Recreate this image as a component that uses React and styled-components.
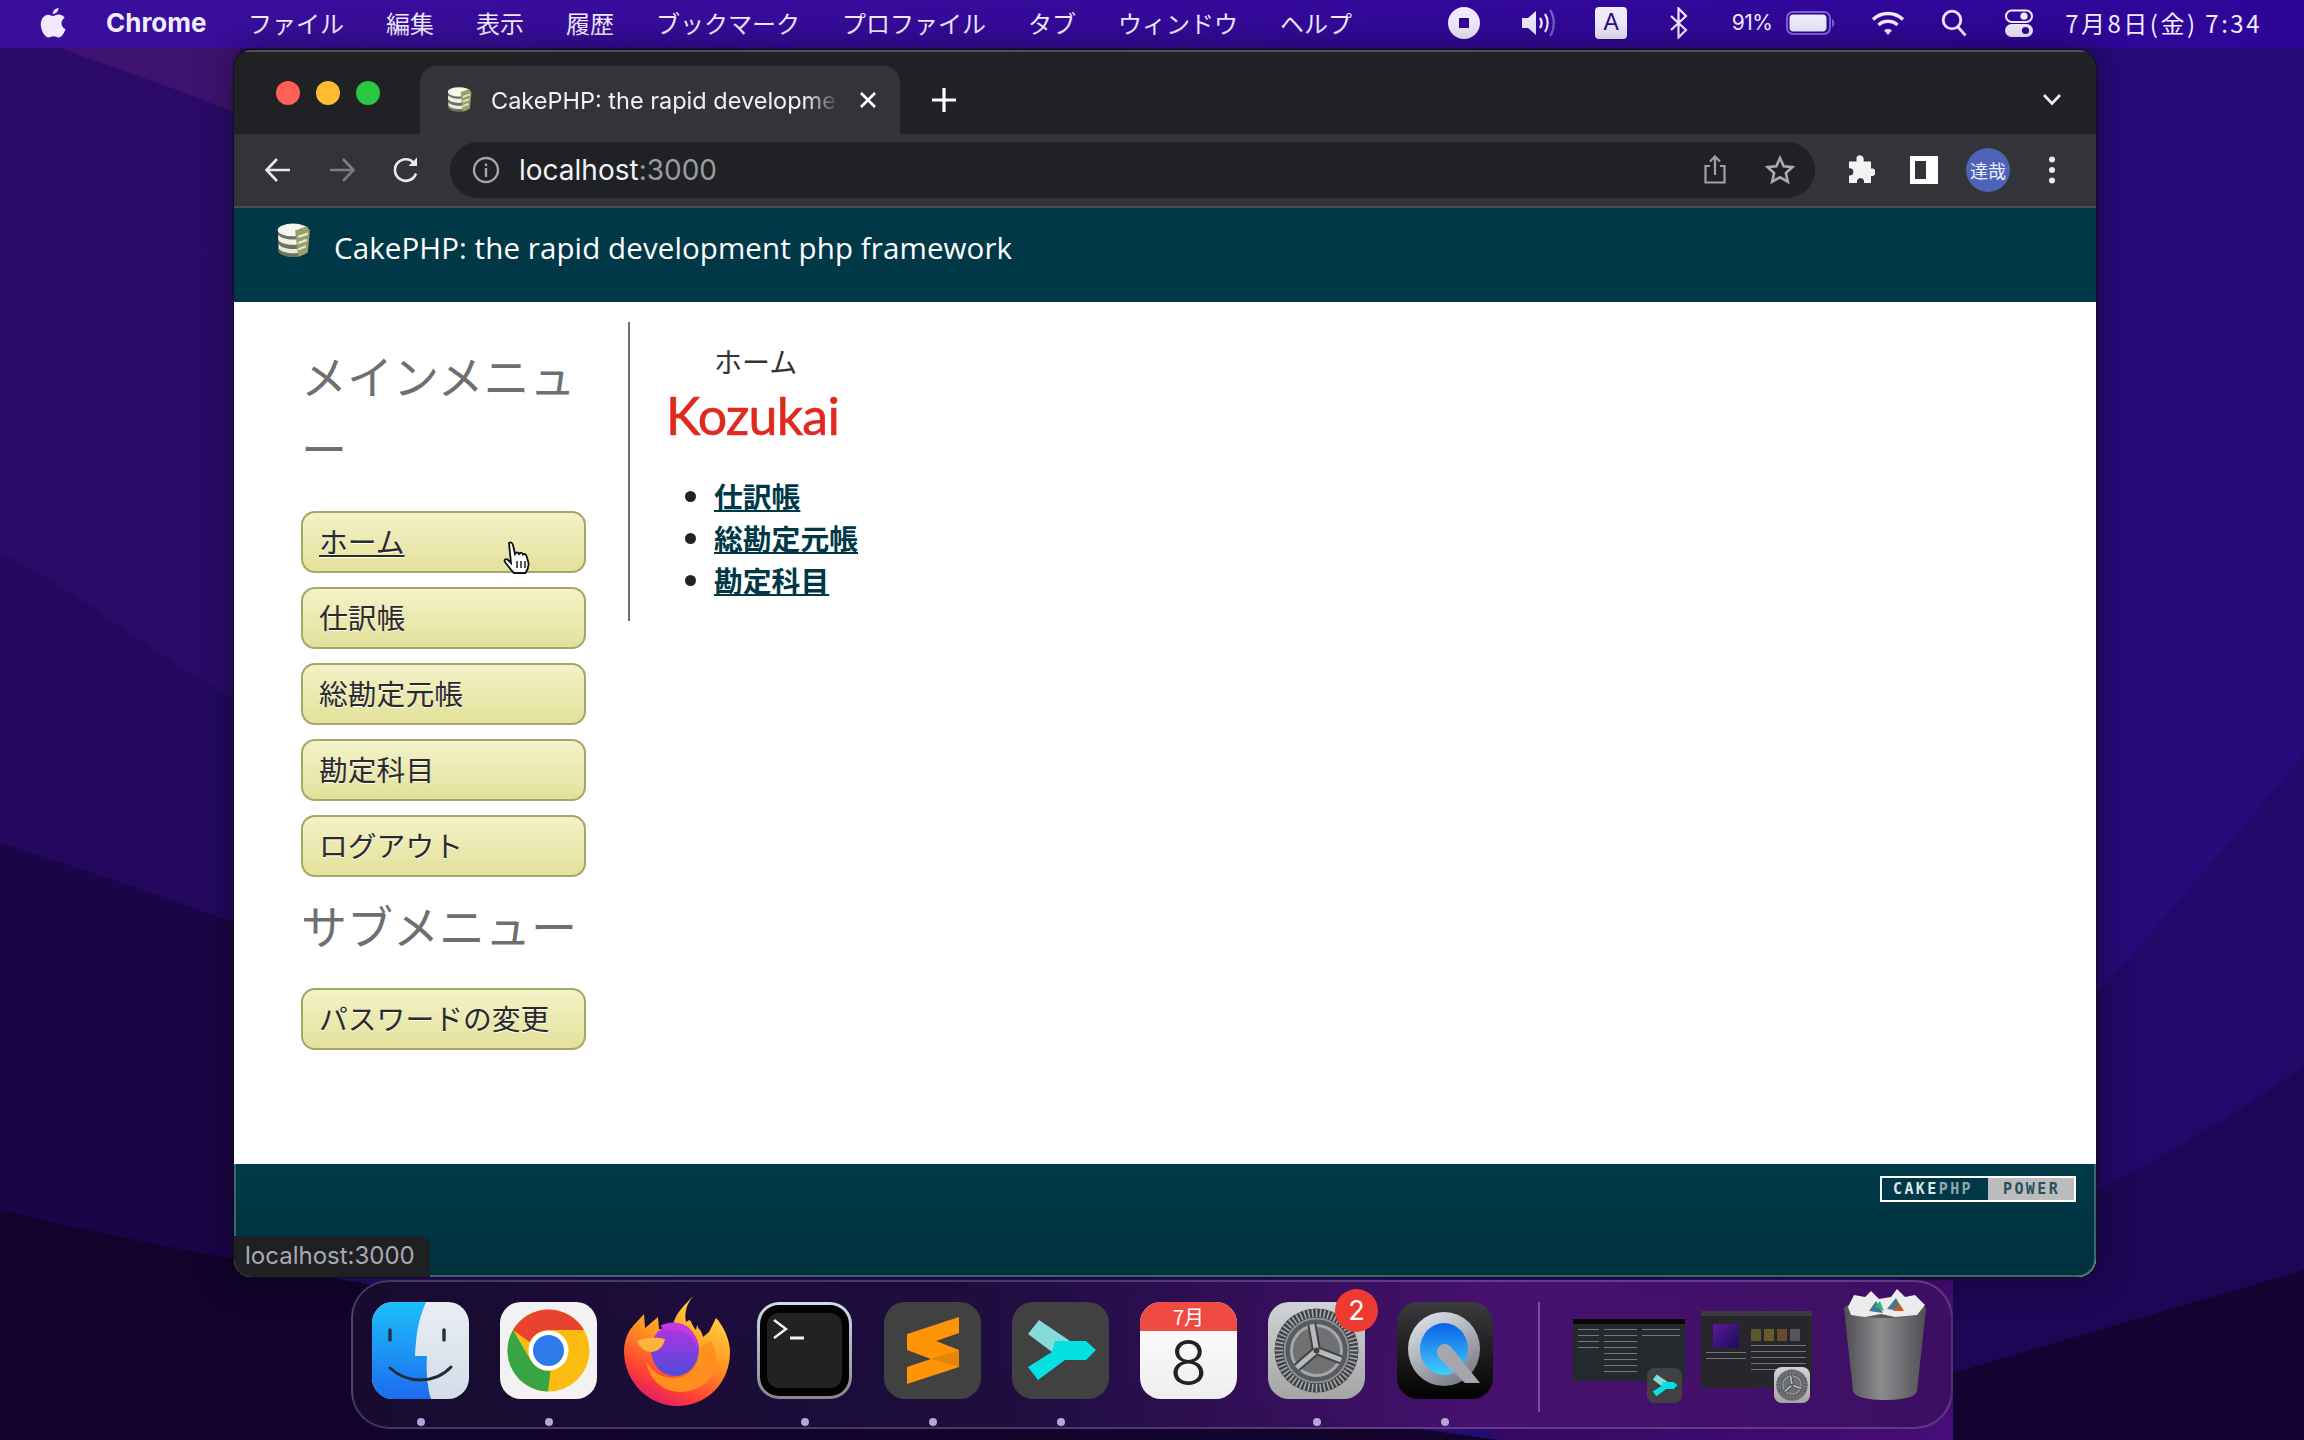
import styled, { createGlobalStyle } from "styled-components";

const GlobalStyle = createGlobalStyle`
  html, body {
    margin: 0;
    padding: 0;
    background: #16063f;
  }
  * {
    box-sizing: border-box;
  }
  svg {
    flex: none;
  }
`;

const MENU_ITEMS = ["ファイル", "編集", "表示", "履歴", "ブックマーク", "プロファイル", "タブ", "ウィンドウ", "ヘルプ"];
const SIDE_MAIN = ["ホーム", "仕訳帳", "総勘定元帳", "勘定科目", "ログアウト"];
const LINKS = ["仕訳帳", "総勘定元帳", "勘定科目"];

function Wallpaper() {
  return (
    <WallpaperArt viewBox="0 0 2304 1440" preserveAspectRatio="none">
      <defs>
        <linearGradient id="wallBase" x1="0" y1="0" x2="1" y2="0">
          <stop offset="0" stopColor="#2b0a68" />
          <stop offset="1" stopColor="#260a7a" />
        </linearGradient>
        <linearGradient id="wallGlow" x1="0" y1="0" x2="1" y2="0">
          <stop offset="0" stopColor="#2c0858" />
          <stop offset="1" stopColor="#470c78" />
        </linearGradient>
      </defs>
      <rect width="2304" height="1440" fill="url(#wallBase)" />
      <path d="M60 48C120 70 180 90 240 115V48z" fill="#3e1270" />
      <path d="M0 553C80 590 160 660 240 702V1440H0z" fill="#240860" />
      <path d="M0 843Q120 880 240 925V1440H0z" fill="#1a0547" />
      <path d="M0 1210Q120 1240 400 1290L1500 1440H0z" fill="#11032c" />
      <path d="M1900 1200Q2100 1000 2304 754V1440H1900z" fill="#220868" />
      <path d="M1900 1270Q2100 1210 2304 1066V1440H1900z" fill="#1d0655" />
      <path d="M1300 1280L1489 1430 1500 1440H1953V1280z" fill="url(#wallGlow)" />
      <path d="M1953 1373L2304 1270V1440H1953z" fill="#130330" />
    </WallpaperArt>
  );
}

function CakeIcon({ size = 38 }) {
  return (
    <svg width={size} height={size} viewBox="0 0 36 36">
      <path d="M4 8v20c4 7 24 7 28 0V8z" fill="#6f725e" />
      <path d="M4 12c4 6 24 6 28 0v5c-4 6-24 6-28 0z" fill="#f2f1e6" />
      <path d="M4.500 21c4 6 23 6 27 0v4c-4 6-23 6-27 0z" fill="#ecebdd" />
      <ellipse cx="18" cy="7.500" rx="14.500" ry="6" fill="#f6f5ee" />
      <path d="M20 8l11-4 3 4-2 21-9 4z" fill="#9aa06a" />
      <path d="M23 14l9-3M23 20l8-3M23 26l7-3" stroke="#e4e6cf" strokeWidth="2.200" />
    </svg>
  );
}

function AppleIcon() {
  return (
    <svg width="26" height="32" viewBox="0 0 26 32" fill="#f1eaff">
      <path d="M18.500 1c.2 2.500-2.300 6-5.800 6-.3-2.700 2.500-5.700 5.800-6z" />
      <path d="M13 9c1.500 0 3-1.500 5.700-1.500 2.100 0 4.500 1 6 3.300-4.700 2.800-4 9.500.9 11.400-1.300 3.400-4 8.300-7 8.300-1.900 0-2.800-1.200-5-1.200s-3.200 1.200-5 1.200C4.800 30.500.8 23.500.8 17.500c0-6 3.700-9.800 7.300-9.800 2.300 0 3.700 1.300 4.900 1.300z" />
    </svg>
  );
}

function BackIcon({ color = "#e8eaed", flip }) {
  return (
    <svg width="28" height="28" viewBox="0 0 28 28" fill="none" stroke={color} strokeWidth="2.600" style={flip ? { transform: "scaleX(-1)" } : undefined}>
      <path d="M26 14H3M13 3L2.500 14 13 25" />
    </svg>
  );
}

function ReloadIcon() {
  return (
    <svg width="28" height="28" viewBox="0 0 28 28" fill="none" stroke="#e8eaed" strokeWidth="2.600">
      <path d="M24 17.500A10.800 10.800 0 1 1 22 7" />
      <path d="M25 1.500V10h-8.500z" fill="#e8eaed" stroke="none" />
    </svg>
  );
}

function InfoIcon() {
  return (
    <svg width="28" height="28" viewBox="0 0 28 28" fill="none">
      <circle cx="14" cy="14" r="12" stroke="#a4a6a9" strokeWidth="2.400" />
      <rect x="12.800" y="12" width="2.400" height="9" fill="#a4a6a9" />
      <rect x="12.800" y="7.500" width="2.400" height="2.600" fill="#a4a6a9" />
    </svg>
  );
}

function ShareIcon() {
  return (
    <svg width="24" height="30" viewBox="0 0 24 30" fill="none" stroke="#a0a2a5" strokeWidth="2.200">
      <path d="M7 11H2.500v16.500h19V11H17" />
      <path d="M12 20V2M7 6.500L12 1.500l5 5" />
    </svg>
  );
}

function StarIcon() {
  return (
    <svg width="30" height="30" viewBox="0 0 30 30" fill="none" stroke="#a8aaad" strokeWidth="2.600">
      <path d="M15 3l3.700 8.200 8.800.9-6.600 5.900 1.900 8.700L15 22.300l-7.800 4.400 1.900-8.700-6.600-5.900 8.800-.9z" />
    </svg>
  );
}

function PuzzleIcon() {
  return (
    <svg width="30" height="30" viewBox="0 0 30 30" fill="#f1f3f4">
      <path d="M11.500 2.500a3.800 3.800 0 0 1 7.200 1.500v2.500h7.300v7h2a4 4 0 0 1 0 7.500h-2v7h-7v-2.500a3.700 3.700 0 0 0-7 0V28H4v-7.500h1.500a3.700 3.700 0 0 0 0-7.200H4v-6.800h7.500z" />
    </svg>
  );
}

function PanelIcon() {
  return (
    <svg width="28" height="28" viewBox="0 0 28 28">
      <path fillRule="evenodd" d="M0 0h28v28H0zM5 5v18h11V5z" fill="#fff" />
    </svg>
  );
}

function DotsIcon() {
  return (
    <svg width="8" height="28" viewBox="0 0 8 28" fill="#e8eaed">
      <circle cx="4" cy="3.500" r="3" />
      <circle cx="4" cy="14" r="3" />
      <circle cx="4" cy="24.500" r="3" />
    </svg>
  );
}

function StopIcon() {
  return (
    <svg width="32" height="32" viewBox="0 0 32 32">
      <path fillRule="evenodd" d="M16 0a16 16 0 1 1 0 32 16 16 0 0 1 0-32zM11 11v10h10V11z" fill="#f1ecff" />
    </svg>
  );
}

function SpeakerIcon() {
  return (
    <svg width="36" height="30" viewBox="0 0 36 30" fill="none">
      <path d="M1 10h6l8-7v24l-8-7H1z" fill="#efe9ff" />
      <path d="M19 10c2 3 2 7 0 10" stroke="#efe9ff" strokeWidth="2.400" />
      <path d="M24 6c3.500 5 3.500 13 0 18" stroke="#efe9ff" strokeWidth="2.200" />
      <path d="M29 2c5 7 5 19 0 26" stroke="#7563c8" strokeWidth="2.200" />
    </svg>
  );
}

function BluetoothIcon() {
  return (
    <svg width="20" height="32" viewBox="0 0 20 32" fill="none" stroke="#efe9ff" strokeWidth="2.200">
      <path d="M2 9l15 14-7.500 7.500v-29L17 9 2 23" />
    </svg>
  );
}

function BatteryIcon() {
  return (
    <svg width="50" height="24" viewBox="0 0 50 24">
      <rect x="1" y="1" width="43" height="22" rx="6" fill="none" stroke="#7868d0" strokeWidth="2" />
      <rect x="3.500" y="3.500" width="37" height="17" rx="4" fill="#f1ecff" />
      <path d="M46 8c3 1 3 7 0 8z" fill="#7868d0" />
    </svg>
  );
}

function WifiIcon() {
  return (
    <svg width="34" height="26" viewBox="0 0 34 26" fill="none" stroke="#f1ecff" strokeWidth="3.400">
      <path d="M2 9.500c8.500-8 21.500-8 30 0" />
      <path d="M7.500 15c5.500-5 13.500-5 19 0" />
      <path d="M13 20.500l4 4.500 4-4.500c-2.400-2-5.600-2-8 0z" fill="#f1ecff" stroke="none" />
    </svg>
  );
}

function SearchIcon() {
  return (
    <svg width="26" height="28" viewBox="0 0 26 28" fill="none" stroke="#f1ecff" strokeWidth="2.800">
      <circle cx="11" cy="11" r="8.800" />
      <path d="M17 18l7.500 8.500" />
    </svg>
  );
}

function ControlIcon() {
  return (
    <svg width="28" height="28" viewBox="0 0 28 28">
      <rect x="1" y="1.500" width="26" height="11.500" rx="5.700" fill="none" stroke="#f1ecff" strokeWidth="2" />
      <circle cx="19" cy="7.200" r="3.600" fill="#f1ecff" />
      <rect x="0" y="15" width="28" height="13" rx="6.500" fill="#f1ecff" />
      <circle cx="20.500" cy="21.500" r="3.600" fill="#34079a" />
    </svg>
  );
}

function FinderIcon({ size = 97 }) {
  return (
    <svg width={size} height={size} viewBox="0 0 97 97">
      <defs>
        <linearGradient id="finderBlue" x1="0" y1="0" x2="0" y2="1">
          <stop offset="0" stopColor="#1cc0fb" />
          <stop offset="1" stopColor="#1c6bef" />
        </linearGradient>
        <linearGradient id="finderGrey" x1="0" y1="0" x2="0" y2="1">
          <stop offset="0" stopColor="#e9eef2" />
          <stop offset="1" stopColor="#d2dde8" />
        </linearGradient>
      </defs>
      <rect width="97" height="97" rx="21" fill="url(#finderGrey)" />
      <path d="M21 0h33c-8 18-10 34-11 54h12c-1 14 0 30 4 43H21A21 21 0 0 1 0 76V21A21 21 0 0 1 21 0z" fill="url(#finderBlue)" />
      <path d="M18 28v10M72 28v10" stroke="#2a3140" strokeWidth="3.500" strokeLinecap="round" />
      <path d="M18 66c17 16 45 16 61-1" fill="none" stroke="#1e2a3e" strokeWidth="3" strokeLinecap="round" />
    </svg>
  );
}

function ChromeIcon() {
  return (
    <svg width="97" height="97" viewBox="0 0 97 97">
      <rect width="97" height="97" rx="21" fill="#f3f2f3" />
      <circle cx="48.500" cy="48.500" r="41" fill="#fbbc10" />
      <path d="M13 28A41 41 0 0 1 84 28H48.500a21 21 0 0 0-19 12z" fill="#e8432e" />
      <path d="M13 28l17.500 30a21 21 0 0 0 20 11L48 89.500A41 41 0 0 1 13 28z" fill="#37a546" />
      <circle cx="48.500" cy="48.500" r="20" fill="#fff" />
      <circle cx="48.500" cy="48.500" r="15.500" fill="#3079ea" />
    </svg>
  );
}

function FirefoxIcon() {
  return (
    <svg width="106" height="110" viewBox="0 0 106 110">
      <defs>
        <linearGradient id="foxBody" x1="0.800" y1="0" x2="0.300" y2="1">
          <stop offset="0" stopColor="#ffe24a" />
          <stop offset="0.450" stopColor="#ff9a20" />
          <stop offset="0.800" stopColor="#ff4035" />
          <stop offset="1" stopColor="#e01a6a" />
        </linearGradient>
        <linearGradient id="foxGlobe" x1="0.500" y1="0" x2="0.500" y2="1">
          <stop offset="0" stopColor="#b533e2" />
          <stop offset="1" stopColor="#4f4bd8" />
        </linearGradient>
      </defs>
      <path d="M69 0c-6 8-9 16-7 26 6-5 4 1 10 8l1-5c2 6 4 3 6 12l6-5 7-14c6 6 14 20 14 34 0 30-22 54-53 54C25 110 0 86 0 55c0-9 3-18 9-25l11-12 1 14 13-11 1 12c6 0 10-2 14-3C50 18 62 8 69 0z" fill="url(#foxBody)" />
      <ellipse cx="51" cy="54" rx="24" ry="26" fill="url(#foxGlobe)" />
      <path d="M13 45c8-4 20-4 28-2-2 8-6 12-14 13-6 0-11-4-14-11z" fill="#ffb33c" />
      <path d="M36 30c8-5 22-5 30 3 6 6 8 18 8 22-2-10-8-18-18-20-6-1-14 0-20-5z" fill="#c539dd" />
      <path d="M76 52c2 16-10 30-26 30-14 0-24-8-28-18 2 18 16 32 34 32 20 0 36-14 36-34 0-6-2-12-6-18 0 4-6 4-10 8z" fill="#ff8f1f" />
    </svg>
  );
}

function TerminalIcon() {
  return (
    <svg width="95" height="97" viewBox="0 0 95 97">
      <defs>
        <linearGradient id="termEdge" x1="0" y1="0" x2="0" y2="1">
          <stop offset="0" stopColor="#cfdee8" />
          <stop offset="1" stopColor="#86868a" />
        </linearGradient>
      </defs>
      <rect width="95" height="97" rx="22" fill="url(#termEdge)" />
      <rect x="3" y="3" width="89" height="91" rx="19" fill="#020202" />
      <rect x="10" y="11" width="75" height="75" rx="12" fill="#222224" />
      <path d="M17 18l12 9-12 9" fill="none" stroke="#f2f2f2" strokeWidth="2.400" />
      <path d="M33 36h14" stroke="#f2f2f2" strokeWidth="3" />
    </svg>
  );
}

function SublimeIcon() {
  return (
    <svg width="97" height="97" viewBox="0 0 97 97">
      <rect width="97" height="97" rx="21" fill="#414141" />
      <path d="M75 15L23 32v16l24 9-24 8v17l52-17V48L52 39l23-8z" fill="#ff9406" />
      <path d="M47 57l28-9v17z" fill="#e68408" />
    </svg>
  );
}

function SiderIcon({ size = 97 }) {
  return (
    <svg width={size} height={size} viewBox="0 0 97 97">
      <rect width="97" height="97" rx="21" fill="#414141" />
      <path d="M27 18L16 32l24 18 18-11z" fill="#86dbd9" />
      <path d="M43 39h31l10 9-10 10H53L26 78 16 65l24-15z" fill="#05e0e2" />
    </svg>
  );
}

function PrefsIcon({ size = 97 }) {
  const teeth = Array.from({ length: 60 }, (_, i) => i * 6);
  return (
    <svg width={size} height={size} viewBox="0 0 97 97">
      <defs>
        <linearGradient id="prefsBg" x1="0" y1="0" x2="0" y2="1">
          <stop offset="0" stopColor="#cfd3d7" />
          <stop offset="1" stopColor="#a5a5a6" />
        </linearGradient>
      </defs>
      <rect width="97" height="97" rx="21" fill="url(#prefsBg)" />
      <circle cx="48.500" cy="48.500" r="42" fill="#3f4143" />
      {teeth.map((a) => (
        <rect key={a} x="47.700" y="7" width="1.600" height="8" fill="#a9acae" transform={`rotate(${a} 48.500 48.500)`} />
      ))}
      <circle cx="48.500" cy="48.500" r="32" fill="#585a5c" stroke="#8f9296" strokeWidth="2" />
      <circle cx="48.500" cy="48.500" r="25" fill="#6e7072" stroke="#a4a7aa" strokeWidth="3" />
      <g transform="rotate(-10 48.500 48.500)">
        <path d="M48.500 48.500V22M48.500 48.500L71 62M48.500 48.500L26 62" stroke="#3f4143" strokeWidth="9" />
        <path d="M48.500 48.500V22M48.500 48.500L71 62M48.500 48.500L26 62" stroke="#b7babd" strokeWidth="5" />
      </g>
      <circle cx="48.500" cy="48.500" r="3" fill="#444" />
    </svg>
  );
}

function QuickTimeIcon() {
  return (
    <svg width="96" height="97" viewBox="0 0 96 97">
      <defs>
        <linearGradient id="qtBg" x1="0" y1="0" x2="0" y2="1">
          <stop offset="0" stopColor="#3b3b3d" />
          <stop offset="1" stopColor="#020203" />
        </linearGradient>
        <linearGradient id="qtRing" x1="0" y1="0" x2="0.600" y2="1">
          <stop offset="0" stopColor="#e8edf5" />
          <stop offset="1" stopColor="#7c8086" />
        </linearGradient>
        <linearGradient id="qtCore" x1="0" y1="0" x2="0" y2="1">
          <stop offset="0" stopColor="#0a60ea" />
          <stop offset="1" stopColor="#42d0fb" />
        </linearGradient>
      </defs>
      <rect width="96" height="97" rx="21" fill="url(#qtBg)" />
      <ellipse cx="47" cy="47" rx="36" ry="37" fill="url(#qtRing)" />
      <ellipse cx="47" cy="47" rx="24" ry="26" fill="url(#qtCore)" />
      <path d="M41 46c3-5 9-5 13-1l29 36H68L42 56c-2-3-3-7-1-10z" fill="#a4a8ae" />
    </svg>
  );
}

function TrashIcon() {
  return (
    <svg width="84" height="111" viewBox="0 0 84 111">
      <defs>
        <linearGradient id="canBody" x1="0" y1="0" x2="1" y2="0">
          <stop offset="0" stopColor="#4e4e52" />
          <stop offset="0.450" stopColor="#8c8c8f" />
          <stop offset="1" stopColor="#505054" />
        </linearGradient>
      </defs>
      <path d="M1 20h82l-9 82c-1 6-15 9-32 9s-31-3-32-9z" fill="url(#canBody)" />
      <ellipse cx="42" cy="20" rx="41" ry="9" fill="#56565a" />
      <path d="M5 18L11 6l11 2 6-6 8 8 12-2 6-8 8 8 10-2 10 10-8 10-22 2-14-3-16 3-14-2z" fill="#ececec" />
      <path d="M26 22l7-10 7 12zM44 20l9-11 7 13z" fill="#3f7a8e" />
      <path d="M32 18l5-6 4 10z" fill="#2cb67a" />
      <path d="M50 22l6-8 5 8z" fill="#c25a2c" />
    </svg>
  );
}

function CalendarIcon() {
  return (
    <CalendarTile>
      <CalendarHead>7月</CalendarHead>
      <CalendarDay>8</CalendarDay>
    </CalendarTile>
  );
}

function ThumbOne() {
  return (
    <ThumbStack $w={112} $after={-15}>
      <ThumbShot $w={112} $h={62} $top={17} $bg="#24292e">
        <ThumbTitle $bg="#050505" />
        <ThumbRow>
          <ThumbCol $w={22}><ThumbLines $n={4} /></ThumbCol>
          <ThumbCol $w={34}><ThumbLines $n={8} /></ThumbCol>
          <ThumbCol $w={40}><ThumbLines $n={2} /></ThumbCol>
        </ThumbRow>
      </ThumbShot>
      <ThumbBadge $right={3}>
        <SiderIcon size={35} />
      </ThumbBadge>
    </ThumbStack>
  );
}

function ThumbTwo() {
  return (
    <ThumbStack $w={111}>
      <ThumbShot $w={111} $h={77} $top={9} $bg="#27272b">
        <ThumbTitle $bg="#3a3a3f" />
        <ThumbRow>
          <ThumbCol $w={40}>
            <ThumbScreen />
            <ThumbLines $n={2} />
          </ThumbCol>
          <ThumbCol $w={55}>
            <ThumbChips>
              <ThumbChip $c="#5a5a30" />
              <ThumbChip $c="#6a5a2a" />
              <ThumbChip $c="#6a4a2a" />
              <ThumbChip $c="#55565a" />
            </ThumbChips>
            <ThumbLines $n={5} />
          </ThumbCol>
        </ThumbRow>
      </ThumbShot>
      <ThumbBadge $right={2}>
        <PrefsIcon size={36} />
      </ThumbBadge>
    </ThumbStack>
  );
}

export default function App() {
  return (
    <Screen>
      <GlobalStyle />
      <Wallpaper />
      <MenuBar>
        <AppleSlot>
          <AppleIcon />
        </AppleSlot>
        <AppName>Chrome</AppName>
        {MENU_ITEMS.map((item) => (
          <MenuItem key={item}>{item}</MenuItem>
        ))}
        <StatusArea>
          <StatusSlot $w={32}><StopIcon /></StatusSlot>
          <StatusSlot $w={36} $gap={41}><SpeakerIcon /></StatusSlot>
          <InputBadge>A</InputBadge>
          <StatusSlot $w={20} $gap={41.5}><BluetoothIcon /></StatusSlot>
          <BatteryText>91%</BatteryText>
          <StatusSlot $w={50} $gap={11.5}><BatteryIcon /></StatusSlot>
          <StatusSlot $w={34} $gap={34.5}><WifiIcon /></StatusSlot>
          <StatusSlot $w={26} $gap={36.5}><SearchIcon /></StatusSlot>
          <StatusSlot $w={28} $gap={38}><ControlIcon /></StatusSlot>
          <ClockText>7月8日(金) 7:34</ClockText>
        </StatusArea>
      </MenuBar>

      <Window>
        <TabStrip>
          <Traffic>
            <Light $c="#fe5f57" />
            <Light $c="#febc2e" />
            <Light $c="#28c840" />
          </Traffic>
          <Tab>
            <CakeIcon size={28} />
            <TabTitle>CakePHP: the rapid developme</TabTitle>
            <TabClose>
              <svg width="18" height="18" viewBox="0 0 18 18" stroke="#fff" strokeWidth="2.600">
                <path d="M2 2l14 14M16 2L2 16" />
              </svg>
            </TabClose>
          </Tab>
          <NewTab>
            <svg width="24" height="24" viewBox="0 0 24 24" stroke="#fff" strokeWidth="3.200">
              <path d="M12 0v24M0 12h24" />
            </svg>
          </NewTab>
          <TabMenu>
            <svg width="20" height="12" viewBox="0 0 20 12" fill="none" stroke="#e8eaed" strokeWidth="2.800">
              <path d="M2 1l8 8.500L18 1" />
            </svg>
          </TabMenu>
        </TabStrip>

        <Toolbar>
          <ToolButton><BackIcon /></ToolButton>
          <ToolButton><BackIcon color="#7b7d80" flip /></ToolButton>
          <ToolButton><ReloadIcon /></ToolButton>
          <Omnibox>
            <InfoIcon />
            <UrlText>
              localhost<UrlPort>:3000</UrlPort>
            </UrlText>
            <OmniActions>
              <ShareIcon />
              <StarIcon />
            </OmniActions>
          </Omnibox>
          <ToolRight>
            <ToolButton><PuzzleIcon /></ToolButton>
            <ToolButton><PanelIcon /></ToolButton>
            <ToolButton><Avatar>達哉</Avatar></ToolButton>
            <ToolButton><DotsIcon /></ToolButton>
          </ToolRight>
        </Toolbar>

        <Viewport>
          <PageHeader>
            <CakeIcon />
            <PageTitle>CakePHP: the rapid development php framework</PageTitle>
          </PageHeader>

          <PageBody>
            <SideColumn>
              <SideHeading>メインメニュー</SideHeading>
              <SideList>
                {SIDE_MAIN.map((label, i) => (
                  <SideButton key={label} $hover={i === 0}>
                    {label}
                    {i === 0 && (
                      <Cursor>
                        <svg width="30" height="34" viewBox="0 0 30 34">
                          <path
                            d="M6 2c2-1.500 3.500 0 4 2l2 9c1-2 3-2 4 0 1-1.500 3-1.500 4 .5 1-1 3-.5 3.500 1.500l2 7c.5 4-1 7-3 10H11c-3-3-6-7-9-11-1.500-2 1-4 3-2l3 3z"
                            fill="#fff"
                            stroke="#111"
                            strokeWidth="1.800"
                          />
                          <path d="M14 20v7M18 20v7M22 20v7" stroke="#111" strokeWidth="1.400" />
                        </svg>
                      </Cursor>
                    )}
                  </SideButton>
                ))}
              </SideList>
              <SubHeading>サブメニュー</SubHeading>
              <SideButton>パスワードの変更</SideButton>
            </SideColumn>

            <MainColumn>
              <Crumb>ホーム</Crumb>
              <BrandTitle>Kozukai</BrandTitle>
              <LinkList>
                {LINKS.map((label) => (
                  <LinkItem key={label}>
                    <PageLink>{label}</PageLink>
                  </LinkItem>
                ))}
              </LinkList>
            </MainColumn>
          </PageBody>

          <PageFooter>
            <PowerBadge>
              <PowerLeft>
                CAKE<PowerDim>PHP</PowerDim>
              </PowerLeft>
              <PowerRight>POWER</PowerRight>
            </PowerBadge>
          </PageFooter>
          <StatusBubble>localhost:3000</StatusBubble>
        </Viewport>
      </Window>

      <Dock>
        <DockApp $dot><FinderIcon /></DockApp>
        <DockApp $dot><ChromeIcon /></DockApp>
        <DockApp><FirefoxIcon /></DockApp>
        <DockApp $dot><TerminalIcon /></DockApp>
        <DockApp $dot><SublimeIcon /></DockApp>
        <DockApp $dot><SiderIcon /></DockApp>
        <DockApp><CalendarIcon /></DockApp>
        <DockApp $dot>
          <PrefsIcon />
          <Badge>2</Badge>
        </DockApp>
        <DockApp $dot><QuickTimeIcon /></DockApp>
        <DockDivider />
        <ThumbOne />
        <ThumbTwo />
        <DockApp $w={84} $lift={6}><TrashIcon /></DockApp>
      </Dock>
    </Screen>
  );
}

const Screen = styled.div`
  width: 2304px;
  height: 1440px;
  overflow: hidden;
  position: relative;
  display: flex;
  flex-direction: column;
`;

const WallpaperArt = styled.svg`
  position: absolute;
  inset: 0;
  width: 2304px;
  height: 1440px;
`;

const MenuBar = styled.div`
  position: relative;
  height: 48px;
  flex: none;
  display: flex;
  align-items: center;
  background: linear-gradient(90deg, #3a0f9c, #2f0598);
  color: #f1ecff;
  font-family: "Noto Sans CJK JP", "Liberation Sans", sans-serif;
  font-size: 24px;
  padding: 0 38px 3px 40px;
`;

const AppleSlot = styled.div`
  width: 66px;
  display: flex;
  align-items: center;
`;

const AppName = styled.div`
  width: 142px;
  font-family: Inter, "Liberation Sans", sans-serif;
  font-weight: 700;
  font-size: 26px;
`;

const MenuItem = styled.div`
  margin-right: 42px;
  white-space: nowrap;
`;

const StatusArea = styled.div`
  margin-left: auto;
  display: flex;
  align-items: center;
`;

const StatusSlot = styled.div`
  width: ${(p) => p.$w}px;
  margin-left: ${(p) => p.$gap || 0}px;
  display: flex;
  align-items: center;
  justify-content: center;
`;

const InputBadge = styled.div`
  width: 32px;
  height: 32px;
  margin-left: 38.5px;
  border-radius: 4px;
  background: #f1ecff;
  color: #2c0a80;
  font-family: "Liberation Sans", sans-serif;
  font-size: 23px;
  display: flex;
  align-items: center;
  justify-content: center;
`;

const BatteryText = styled.div`
  margin-left: 43px;
  width: 43px;
  font-family: Inter, sans-serif;
  font-size: 21px;
  letter-spacing: -0.5px;
  white-space: nowrap;
`;

const ClockText = styled.div`
  margin-left: 32px;
  margin-right: 4px;
  font-size: 24px;
  white-space: nowrap;
  letter-spacing: 2.500px;
`;

const Window = styled.div`
  position: relative;
  margin: 2px 208px 0 234px;
  height: 1227px;
  flex: none;
  border-radius: 18px;
  overflow: hidden;
  display: flex;
  flex-direction: column;
  background: #202124;
  box-shadow: 0 0 0 1px #111, 0 0 36px rgba(0, 0, 0, 0.45);
`;

const TabStrip = styled.div`
  height: 84px;
  flex: none;
  display: flex;
  align-items: flex-end;
  background: #202124;
  border-top: 2px solid #505154;
  padding-left: 42px;
`;

const Traffic = styled.div`
  display: flex;
  gap: 16px;
  width: 144px;
  align-self: flex-start;
  margin-top: 29px;
`;

const Light = styled.div`
  width: 24px;
  height: 24px;
  border-radius: 50%;
  background: ${(p) => p.$c};
`;

const Tab = styled.div`
  width: 480px;
  height: 68px;
  background: #323437;
  border-radius: 16px 16px 0 0;
  display: flex;
  align-items: center;
  padding: 0 22px 0 25px;
  gap: 18px;
`;

const TabTitle = styled.div`
  flex: 1;
  overflow: hidden;
  white-space: nowrap;
  color: #f0f1f2;
  font-family: Inter, "Liberation Sans", sans-serif;
  font-size: 23.500px;
  -webkit-mask-image: linear-gradient(90deg, #000 90%, transparent 100%);
  mask-image: linear-gradient(90deg, #000 90%, transparent 100%);
`;

const TabClose = styled.div`
  width: 20px;
  display: flex;
  justify-content: center;
`;

const NewTab = styled.div`
  margin-left: 32px;
  height: 68px;
  display: flex;
  align-items: center;
`;

const TabMenu = styled.div`
  margin-left: auto;
  width: 88px;
  height: 68px;
  display: flex;
  align-items: center;
  justify-content: center;
`;

const Toolbar = styled.div`
  height: 74px;
  flex: none;
  display: flex;
  align-items: center;
  background: #323437;
  border-bottom: 2px solid #4b4d50;
  padding-left: 12px;
`;

const ToolButton = styled.div`
  width: 64px;
  display: flex;
  justify-content: center;
  align-items: center;
`;

const Omnibox = styled.div`
  width: 1365px;
  height: 56px;
  margin-left: 12px;
  border-radius: 28px;
  background: #202124;
  display: flex;
  align-items: center;
  padding: 0 20px 0 22px;
`;

const UrlText = styled.div`
  margin-left: 19px;
  color: #f1f3f4;
  font-family: Inter, "Liberation Sans", sans-serif;
  font-size: 28px;
`;

const UrlPort = styled.span`
  color: #9a9c9f;
`;

const OmniActions = styled.div`
  margin-left: auto;
  display: flex;
  align-items: center;
  gap: 38px;
`;

const ToolRight = styled.div`
  display: flex;
  align-items: center;
  margin-left: 13px;
`;

const Avatar = styled.div`
  width: 44px;
  height: 44px;
  border-radius: 50%;
  background: #4e62b8;
  color: #eef;
  font-family: "Noto Sans CJK JP", sans-serif;
  font-size: 18px;
  display: flex;
  align-items: center;
  justify-content: center;
`;

const Viewport = styled.div`
  flex: 1;
  position: relative;
  display: flex;
  flex-direction: column;
  background: #fff;
`;

const PageHeader = styled.div`
  height: 94px;
  flex: none;
  background: #003847;
  display: flex;
  align-items: flex-start;
  padding: 14px 0 0 40px;
  gap: 22px;
`;

const PageTitle = styled.div`
  color: #fff;
  font-family: "Open Sans", "Noto Sans", sans-serif;
  font-size: 29.500px;
  letter-spacing: 0.1px;
  line-height: 52px;
`;

const PageBody = styled.div`
  flex: 1;
  display: flex;
  align-items: flex-start;
`;

const SideColumn = styled.div`
  width: 394px;
  flex: none;
  padding: 36px 0 0 67px;
  font-family: "Noto Sans CJK JP", sans-serif;
`;

const SideHeading = styled.h2`
  margin: 0 0 29px;
  width: 290px;
  font-weight: 400;
  font-size: 46px;
  line-height: 72px;
  color: #6f6f6f;
  word-break: break-all;
`;

const SubHeading = styled.h2`
  margin: 17px 0 34px;
  font-weight: 400;
  font-size: 46px;
  line-height: 60px;
  color: #6f6f6f;
  white-space: nowrap;
`;

const SideList = styled.div`
  display: flex;
  flex-direction: column;
  gap: 14px;
`;

const SideButton = styled.div`
  position: relative;
  width: 285px;
  height: 62px;
  border: 2px solid #a5a667;
  border-radius: 14px;
  background: linear-gradient(180deg, #f4f2c8 0%, #e3e19a 100%);
  color: #2b2b2b;
  font-size: 28.800px;
  line-height: 56px;
  padding-left: 16px;
  text-shadow: 0 1px 0 #fff;
  text-decoration: ${(p) => (p.$hover ? "underline" : "none")};
`;

const Cursor = styled.span`
  position: absolute;
  left: 200px;
  top: 28px;
  line-height: 0;
`;

const MainColumn = styled.div`
  margin-top: 20px;
  min-height: 299px;
  border-left: 2px solid #6f6f6f;
  padding: 17px 0 0 36px;
  font-family: "Noto Sans CJK JP", sans-serif;
`;

const Crumb = styled.div`
  margin-left: 48px;
  font-size: 28px;
  line-height: 44px;
  color: #333;
`;

const BrandTitle = styled.h1`
  margin: 3px 0 0;
  font-family: Lato, "Liberation Sans", sans-serif;
  font-weight: 400;
  font-size: 52px;
  line-height: 58px;
  color: #df2a20;
  letter-spacing: -0.8px;
  -webkit-text-stroke: 0.6px #df2a20;
`;

const LinkList = styled.ul`
  margin: 31px 0 0;
  padding: 0 0 0 48px;
  color: #222;
`;

const LinkItem = styled.li`
  font-size: 28.800px;
  line-height: 42px;
`;

const PageLink = styled.a`
  color: #003847;
  font-weight: 700;
  text-decoration: underline;
`;

const PageFooter = styled.div`
  height: 113px;
  flex: none;
  background: linear-gradient(180deg, #003a49, #00313e);
  border: 2px solid #3d6470;
  border-top: 0;
  border-radius: 0 0 18px 18px;
  display: flex;
  justify-content: flex-end;
  padding: 12px 18px 0 0;
`;

const PowerBadge = styled.div`
  width: 196px;
  height: 26px;
  border: 2px solid #fff;
  display: flex;
  font-family: "DejaVu Sans Mono", monospace;
  font-weight: 700;
  font-size: 15px;
  letter-spacing: 2.400px;
  line-height: 22px;
`;

const PowerLeft = styled.div`
  width: 106px;
  padding-left: 11px;
  background: #003847;
  color: #dfe6e8;
  white-space: nowrap;
`;

const PowerDim = styled.span`
  color: #8fa7ae;
`;

const PowerRight = styled.div`
  flex: 1;
  background: #bcbcbc;
  color: #27505c;
  padding-left: 15px;
`;

const StatusBubble = styled.div`
  position: absolute;
  left: 0;
  bottom: 0;
  width: 196px;
  height: 41px;
  background: #1f2023;
  border-radius: 0 10px 0 0;
  color: #a9abae;
  font-family: Inter, "Liberation Sans", sans-serif;
  font-size: 24px;
  line-height: 40px;
  padding-left: 11px;
`;

const Dock = styled.div`
  position: relative;
  width: 1602px;
  height: 149px;
  margin: 3px 0 0 351px;
  flex: none;
  border: 2px solid rgba(190, 170, 220, 0.28);
  border-radius: 38px;
  background: linear-gradient(90deg, rgba(24, 12, 48, 0.95) 0%, rgba(30, 14, 62, 0.95) 40%, rgba(72, 18, 112, 0.95) 72%, rgba(60, 16, 98, 0.95) 100%);
  display: flex;
  align-items: flex-start;
  padding: 20px 0 0 19px;
  gap: 31px;
`;

const DockApp = styled.div`
  position: relative;
  width: ${(p) => p.$w || 97}px;
  height: 97px;
  flex: none;
  display: flex;
  align-items: center;
  justify-content: center;
  margin-top: ${(p) => (p.$lift ? -p.$lift : 0)}px;

  ${(p) =>
    p.$dot &&
    `&::after {
      content: "";
      position: absolute;
      left: 50%;
      bottom: -27px;
      width: 8px;
      height: 8px;
      margin-left: -4px;
      border-radius: 50%;
      background: #b7a4dc;
    }`}
`;

const Badge = styled.div`
  position: absolute;
  top: -13px;
  right: -13px;
  width: 43px;
  height: 43px;
  border-radius: 50%;
  background: #ee3a32;
  color: #fff;
  font-family: Inter, sans-serif;
  font-size: 27px;
  display: flex;
  align-items: center;
  justify-content: center;
`;

const CalendarTile = styled.div`
  width: 97px;
  height: 97px;
  border-radius: 21px;
  background: linear-gradient(180deg, #fff, #eeeeee);
`;

const CalendarHead = styled.div`
  height: 29px;
  border-radius: 21px 21px 0 0;
  background: #f04a42;
  color: #fff;
  font-family: "Noto Sans CJK JP", sans-serif;
  font-size: 20px;
  line-height: 29px;
  text-align: center;
`;

const CalendarDay = styled.div`
  color: #222;
  font-family: Inter, "Liberation Sans", sans-serif;
  font-weight: 300;
  font-size: 62px;
  line-height: 64px;
  text-align: center;
`;

const DockDivider = styled.div`
  width: 2px;
  height: 110px;
  flex: none;
  margin: 0 2px 0 14px;
  background: rgba(220, 200, 240, 0.35);
`;

const ThumbStack = styled.div`
  position: relative;
  width: ${(p) => p.$w}px;
  height: 111px;
  flex: none;
  margin-right: ${(p) => p.$after || 0}px;
`;

const ThumbShot = styled.div`
  position: absolute;
  left: 0;
  top: ${(p) => p.$top}px;
  width: ${(p) => p.$w}px;
  height: ${(p) => p.$h}px;
  background: ${(p) => p.$bg};
  display: flex;
  flex-direction: column;
`;

const ThumbTitle = styled.div`
  height: 5px;
  flex: none;
  background: ${(p) => p.$bg};
`;

const ThumbRow = styled.div`
  display: flex;
  gap: 5px;
  padding: 5px;
`;

const ThumbCol = styled.div`
  width: ${(p) => p.$w}px;
  display: flex;
  flex-direction: column;
  gap: 4px;
`;

const ThumbLines = styled.div`
  height: ${(p) => p.$n * 6}px;
  background: repeating-linear-gradient(180deg, #73767c 0 1px, transparent 1px 6px);
`;

const ThumbScreen = styled.div`
  width: 26px;
  height: 24px;
  margin: 3px auto 0;
  background: linear-gradient(135deg, #5a1a9a, #1d0a5a);
`;

const ThumbChips = styled.div`
  display: flex;
  gap: 3px;
  margin-top: 8px;
`;

const ThumbChip = styled.div`
  width: 10px;
  height: 12px;
  background: ${(p) => p.$c};
`;

const ThumbBadge = styled.div`
  position: absolute;
  right: ${(p) => p.$right}px;
  bottom: 10px;
  line-height: 0;
`;
